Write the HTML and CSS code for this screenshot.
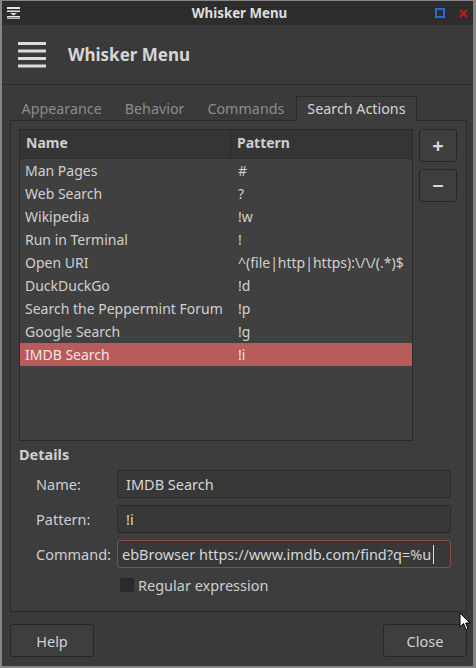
FILE: index.html
```html
<!DOCTYPE html>
<html>
<head>
<meta charset="utf-8">
<link rel="stylesheet" href="styles.css">
</head>
<body>
<div class="window">
  <div class="titlebar">
    <svg class="tb-icon" width="13" height="12" viewBox="0 0 13 12">
      <rect x="0" y="0" width="13" height="2" fill="#e6e6e6"/>
      <rect x="0" y="3.5" width="13" height="1.5" fill="#e6e6e6"/>
      <path d="M3 6 L10 6 L6.5 8.5 Z" fill="#e6e6e6"/>
      <rect x="0" y="9" width="13" height="1.5" fill="#e6e6e6"/>
      <rect x="0" y="11" width="13" height="1" fill="#bbbbbb"/>
    </svg>
    <div class="tb-title">Whisker Menu</div>
    <div class="tb-controls">
      <span class="tb-max"></span>
      <svg class="tb-close" width="9" height="9" viewBox="0 0 9 9">
        <path d="M1 1 L8 8 M8 1 L1 8" stroke="#d01616" stroke-width="2"/>
      </svg>
    </div>
  </div>
  <div class="body">
    <div class="header">
      <svg class="ham" width="28" height="26" viewBox="0 0 28 26">
        <rect x="0" y="0" width="28" height="3" fill="#d8dbe0"/>
        <rect x="0" y="7.5" width="28" height="3" fill="#d8dbe0"/>
        <rect x="0" y="15" width="28" height="3" fill="#d8dbe0"/>
        <rect x="0" y="22.5" width="28" height="3" fill="#d8dbe0"/>
      </svg>
      <div class="header-title">Whisker Menu</div>
    </div>
    <div class="tabs">
      <div class="tab">Appearance</div>
      <div class="tab">Behavior</div>
      <div class="tab">Commands</div>
      <div class="tab active">Search Actions</div>
    </div>
    <div class="panel">
      <div class="top-row">
        <div class="tree">
          <div class="tree-head">
            <div class="c1">Name</div>
            <div class="c2">Pattern</div>
          </div>
          <div class="row"><div class="c1">Man Pages</div><div class="c2">#</div></div>
          <div class="row"><div class="c1">Web Search</div><div class="c2">?</div></div>
          <div class="row"><div class="c1">Wikipedia</div><div class="c2">!w</div></div>
          <div class="row"><div class="c1">Run in Terminal</div><div class="c2">!</div></div>
          <div class="row"><div class="c1">Open URI</div><div class="c2">^(file|http|https):\/\/(.*)$</div></div>
          <div class="row"><div class="c1">DuckDuckGo</div><div class="c2">!d</div></div>
          <div class="row"><div class="c1">Search the Peppermint Forum</div><div class="c2">!p</div></div>
          <div class="row"><div class="c1">Google Search</div><div class="c2">!g</div></div>
          <div class="row sel"><div class="c1">IMDB Search</div><div class="c2">!i</div></div>
        </div>
        <div class="side-btns">
          <div class="sbtn">+</div>
          <div class="sbtn">−</div>
        </div>
      </div>
      <div class="details-label">Details</div>
      <div class="form">
        <div class="label">Name:</div>
        <div class="entry">IMDB Search</div>
        <div class="label">Pattern:</div>
        <div class="entry">!i</div>
        <div class="label">Command:</div>
        <div class="entry focus"><span>ebBrowser https://www.imdb.com/find?q=%u</span><span class="caret"></span></div>
        <div></div>
        <div class="check"><span class="box"></span><span>Regular expression</span></div>
      </div>
    </div>
    <div class="footer">
      <div class="btn">Help</div>
      <div class="btn">Close</div>
    </div>
  </div>
  <svg class="cursor" width="12" height="19" viewBox="0 0 12 19">
    <path d="M1 1 L1 15 L4.5 11.5 L7 17.5 L9 16.6 L6.6 11 L11 11 Z" fill="#ffffff" stroke="#000000" stroke-width="1"/>
  </svg>
</div>
</body>
</html>
```

FILE: styles.css
```css
html, body {
  margin: 0;
  padding: 0;
}
body {
  width: 476px;
  height: 668px;
  background: #858585;
  padding: 1px 3px 2px 2px;
  box-sizing: border-box;
  font-family: "Noto Sans", "DejaVu Sans", sans-serif;
  color: #d2d2d2;
}
.window {
  position: relative;
  height: 100%;
  display: flex;
  flex-direction: column;
  background: #3a3a3a;
}
.titlebar {
  height: 24px;
  background: #2d2d2d;
  display: flex;
  align-items: center;
  position: relative;
  flex: none;
}
.tb-icon {
  margin-left: 5px;
}
.tb-title {
  position: absolute;
  left: 0;
  right: 0;
  text-align: center;
  font-weight: bold;
  font-size: 13.3px;
  color: #dedede;
  padding-left: 4px;
}
.tb-controls {
  margin-left: auto;
  display: flex;
  align-items: center;
  gap: 14px;
  margin-right: 5px;
}
.tb-max {
  width: 6px;
  height: 6px;
  border: 2px solid #1f6fd6;
}
.header {
  height: 59px;
  border-bottom: 1px solid #2c2c2c;
  display: flex;
  align-items: center;
  flex: none;
}
.ham {
  margin-left: 16px;
  margin-top: 1px;
}
.header-title {
  margin-left: 22px;
  font-weight: bold;
  font-size: 17px;
  color: #d6d6d6;
}
.tabs {
  display: flex;
  padding-left: 8px;
  margin-top: 11px;
  height: 24px;
  flex: none;
  position: relative;
  z-index: 1;
}
.tab {
  padding: 0 10.5px;
  font-size: 14.3px;
  color: #8c8c8c;
  line-height: 23px;
  border: 1px solid transparent;
  border-bottom: none;
}
.tab.active {
  background: #3d3d3d;
  color: #d4d4d4;
  border-color: #2b2b2b;
  height: 24px;
}
.panel {
  margin: 0 6px 0 8px;
  border: 1px solid #2b2b2b;
  background: #3d3d3d;
  height: 492px;
  box-sizing: border-box;
  padding: 8px 8px 0 8px;
  flex: none;
}
.top-row {
  display: flex;
  gap: 6px;
}
.tree {
  width: 394px;
  height: 312px;
  box-sizing: border-box;
  border: 1px solid #2a2a2a;
  background: #404040;
}
.tree-head {
  display: flex;
  height: 29px;
  background: #353535;
  border-bottom: 1px solid #2e2e2e;
  box-sizing: border-box;
  align-items: stretch;
  font-weight: bold;
  font-size: 14px;
  color: #cecece;
  padding-bottom: 3px;
}
.tree-head .c1 {
  width: 211px;
  border-right: 1px solid #2a2a2a;
  box-sizing: border-box;
  padding-left: 6px;
  display: flex;
  align-items: center;
  margin-bottom: -3px;
  padding-bottom: 3px;
}
.tree-head .c2 {
  padding-left: 6px;
  display: flex;
  align-items: center;
}
.row {
  display: flex;
  height: 23px;
  align-items: center;
  font-size: 14px;
  color: #d0d0d0;
}
.row .c1 {
  width: 211px;
  padding-left: 5px;
  box-sizing: border-box;
  white-space: nowrap;
}
.row .c2 {
  padding-left: 7px;
  white-space: nowrap;
}
.row.sel {
  background: #b75b5b;
  color: #f3e4e4;
}
.side-btns {
  display: flex;
  flex-direction: column;
  gap: 7px;
}
.sbtn {
  width: 38px;
  height: 33px;
  box-sizing: border-box;
  border: 1px solid #282828;
  border-radius: 3px;
  background: #3e3e3e;
  display: flex;
  align-items: center;
  justify-content: center;
  font-size: 20px;
  font-weight: bold;
  color: #d8d8d8;
}
.details-label {
  font-weight: bold;
  font-size: 14.5px;
  color: #d0d0d0;
  margin-top: 3px;
  line-height: 20px;
}
.form {
  display: grid;
  grid-template-columns: 98px 334px;
  row-gap: 7px;
  margin-top: 6px;
  align-items: center;
}
.label {
  padding-left: 17px;
  font-size: 14.5px;
  color: #cfcfcf;
}
.entry {
  height: 28px;
  box-sizing: border-box;
  border: 1px solid #2a2a2a;
  border-radius: 3px;
  background: #383838;
  padding-left: 8px;
  display: flex;
  align-items: center;
  font-size: 14.5px;
  color: #d6d6d6;
  white-space: nowrap;
  overflow: hidden;
}
.entry.focus {
  border-color: #8a4a4a;
  padding-left: 4px;
}
.caret {
  display: inline-block;
  width: 1px;
  height: 19px;
  background: #e0e0e0;
  margin-left: 2px;
}
.check {
  display: flex;
  align-items: center;
  gap: 4px;
  font-size: 14.5px;
  color: #cfcfcf;
  margin-top: 0;
  padding-left: 3px;
}
.box {
  width: 14px;
  height: 14px;
  border-radius: 2px;
  background: #2b2b2b;
  border: 1px solid #252525;
  box-sizing: border-box;
}
.footer {
  display: flex;
  justify-content: space-between;
  padding: 12px 6px 0 8px;
}
.btn {
  width: 84px;
  height: 33px;
  box-sizing: border-box;
  border: 1px solid #262626;
  border-radius: 3px;
  background: #3e3e3e;
  display: flex;
  align-items: center;
  justify-content: center;
  font-size: 14.5px;
  color: #d2d2d2;
}
.cursor {
  position: absolute;
  left: 457px;
  top: 611px;
}
```
